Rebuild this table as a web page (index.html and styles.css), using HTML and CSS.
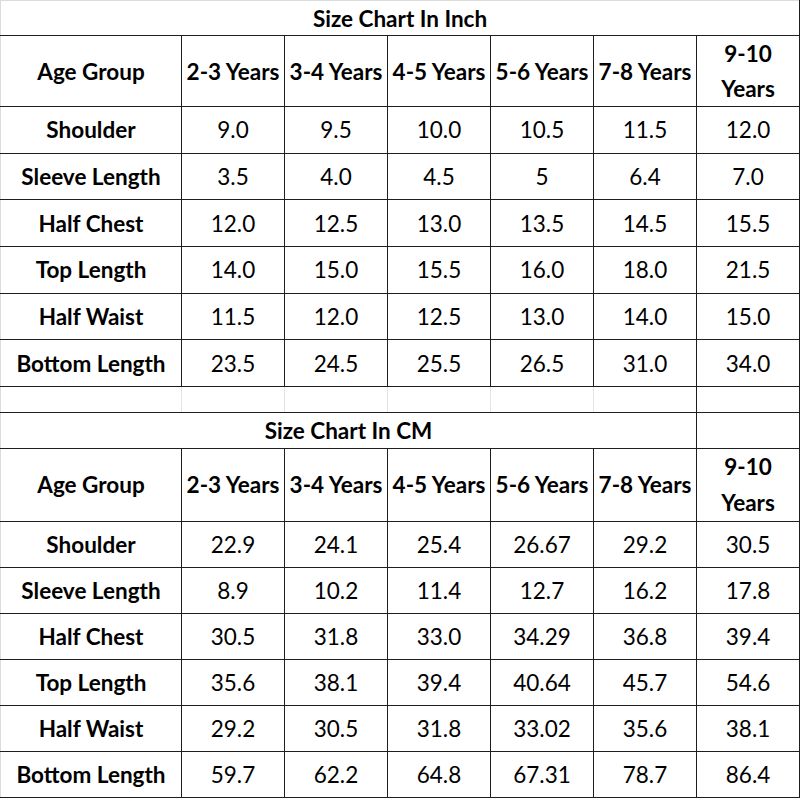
FILE: index.html
```html
<!DOCTYPE html>
<html>
<head>
<meta charset="utf-8">
<link rel="stylesheet" href="styles.css">
</head>
<body>
<table class="chart">
  <colgroup>
    <col class="c-label"><col class="c-val"><col class="c-val"><col class="c-val"><col class="c-val"><col class="c-val"><col class="c-val">
  </colgroup>
  <tr class="r-title r-first"><td colspan="7" class="title">Size Chart In Inch</td></tr>
  <tr class="r-head">
    <th>Age Group</th><th>2-3 Years</th><th>3-4 Years</th><th>4-5 Years</th><th>5-6 Years</th><th>7-8 Years</th><th>9-10<br>Years</th>
  </tr>
  <tr class="r-in"><th>Shoulder</th><td>9.0</td><td>9.5</td><td>10.0</td><td>10.5</td><td>11.5</td><td>12.0</td></tr>
  <tr class="r-in"><th>Sleeve Length</th><td>3.5</td><td>4.0</td><td>4.5</td><td>5</td><td>6.4</td><td>7.0</td></tr>
  <tr class="r-in"><th>Half Chest</th><td>12.0</td><td>12.5</td><td>13.0</td><td>13.5</td><td>14.5</td><td>15.5</td></tr>
  <tr class="r-in"><th>Top Length</th><td>14.0</td><td>15.0</td><td>15.5</td><td>16.0</td><td>18.0</td><td>21.5</td></tr>
  <tr class="r-in"><th>Half Waist</th><td>11.5</td><td>12.0</td><td>12.5</td><td>13.0</td><td>14.0</td><td>15.0</td></tr>
  <tr class="r-in"><th>Bottom Length</th><td>23.5</td><td>24.5</td><td>25.5</td><td>26.5</td><td>31.0</td><td>34.0</td></tr>
  <tr class="r-gap"><td></td><td></td><td></td><td></td><td></td><td class="gap-dark"></td><td class="gap-last"></td></tr>
  <tr class="r-title2"><td colspan="6" class="title">Size Chart In CM</td><td class="blank"></td></tr>
  <tr class="r-head2">
    <th>Age Group</th><th>2-3 Years</th><th>3-4 Years</th><th>4-5 Years</th><th>5-6 Years</th><th>7-8 Years</th><th>9-10<br>Years</th>
  </tr>
  <tr class="r-cm"><th>Shoulder</th><td>22.9</td><td>24.1</td><td>25.4</td><td>26.67</td><td>29.2</td><td>30.5</td></tr>
  <tr class="r-cm"><th>Sleeve Length</th><td>8.9</td><td>10.2</td><td>11.4</td><td>12.7</td><td>16.2</td><td>17.8</td></tr>
  <tr class="r-cm"><th>Half Chest</th><td>30.5</td><td>31.8</td><td>33.0</td><td>34.29</td><td>36.8</td><td>39.4</td></tr>
  <tr class="r-cm"><th>Top Length</th><td>35.6</td><td>38.1</td><td>39.4</td><td>40.64</td><td>45.7</td><td>54.6</td></tr>
  <tr class="r-cm"><th>Half Waist</th><td>29.2</td><td>30.5</td><td>31.8</td><td>33.02</td><td>35.6</td><td>38.1</td></tr>
  <tr class="r-cm"><th>Bottom Length</th><td>59.7</td><td>62.2</td><td>64.8</td><td>67.31</td><td>78.7</td><td>86.4</td></tr>
</table>
</body>
</html>
```
FILE: styles.css
```css
html, body {
  margin: 0;
  padding: 0;
  background: #ffffff;
}

.chart {
  border-collapse: collapse;
  table-layout: fixed;
  width: 800px;
  font-family: Lato, "Liberation Sans", sans-serif;
  font-size: 22.5px;
  color: #000;
}

.c-label { width: 181px; }
.c-val { width: 103px; }

.chart td,
.chart th {
  border: 1px solid #1e1e1e;
  padding: 0;
  text-align: center;
  vertical-align: middle;
  white-space: nowrap;
}

.chart th {
  font-weight: 700;
}

.chart td {
  font-weight: 400;
}

.chart tr > :first-child {
  border-left-color: #dcdcdc;
}

.r-first td {
  border-top-color: #dcdcdc;
}

.title {
  font-weight: 700 !important;
  height: 34px;
}

.r-head th {
  height: 70px;
  line-height: 35px;
}

.r-head2 th {
  height: 72px;
  line-height: 36px;
}

.r-in th, .r-in td {
  height: 45.67px;
}

.r-cm th, .r-cm td {
  height: 45px;
}

.r-gap td {
  height: 25px;
  border-left-color: #e4e4e4;
  border-right-color: #e4e4e4;
}

.r-gap td.gap-dark {
  border-right-color: #1e1e1e;
}

.r-gap td.gap-last {
  border-left-color: #1e1e1e;
  border-right-color: #1e1e1e;
}

.r-title2 .title {
  height: 35px;
}
```
